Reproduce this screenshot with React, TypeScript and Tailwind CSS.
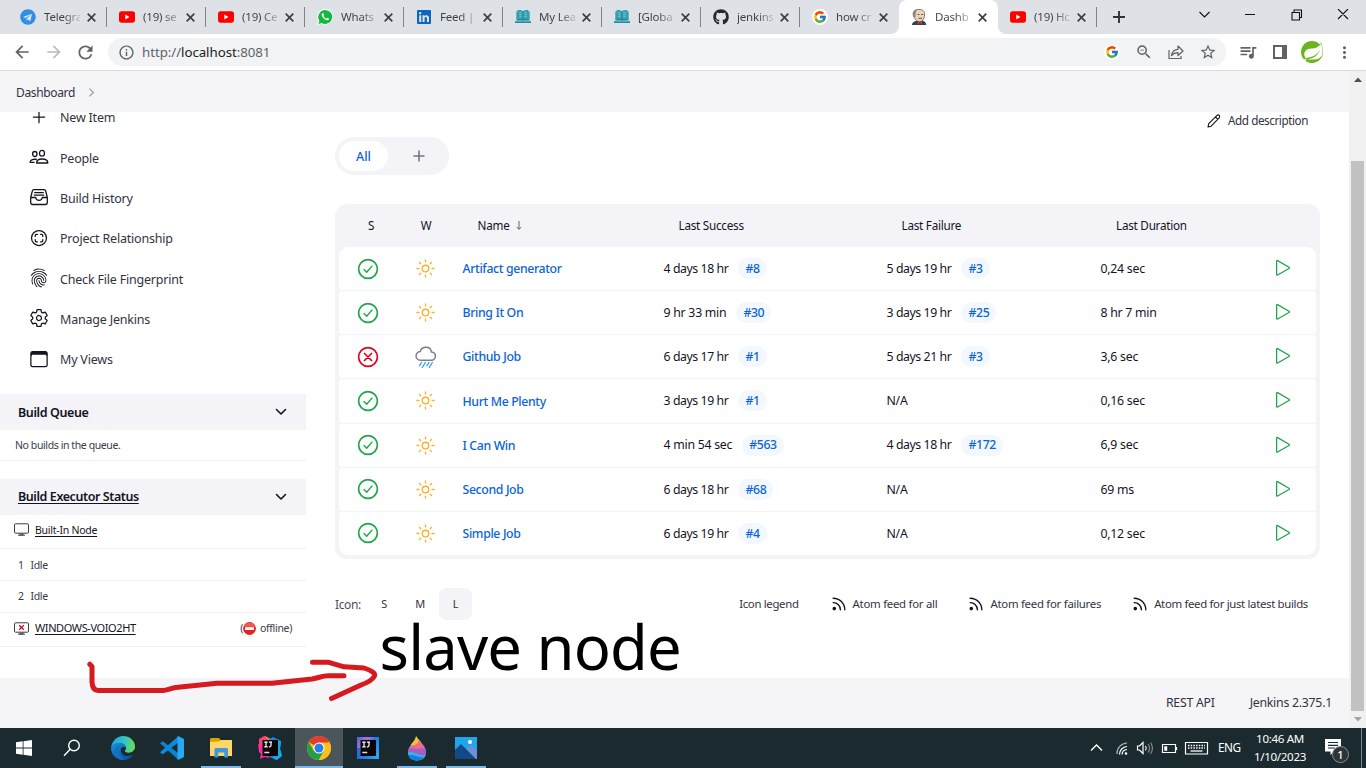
import React from "react";
import {
  IoAddOutline,
  IoFingerPrintOutline,
  IoSettingsOutline,
  IoBrowsersOutline,
  IoScanCircleOutline,
  IoSunnyOutline,
  IoChevronForwardOutline,
} from "react-icons/io5";
import { FaTelegram, FaLinkedin, FaGithub } from "react-icons/fa";
import { FcGoogle } from "react-icons/fc";
import { SiSpring } from "react-icons/si";
import {
  MdArrowBack,
  MdArrowForward,
  MdRefresh,
  MdInfoOutline,
  MdZoomOut,
  MdStarOutline,
  MdQueueMusic,
  MdMoreVert,
} from "react-icons/md";

/* ---------- favicons ---------- */

const YouTube = () => (
  <svg width="16" height="16" viewBox="0 0 16 16">
    <rect x="0" y="2.3" width="16" height="11.4" rx="2.6" fill="#ff0000" />
    <path d="M6.3 5.6v4.8L10.5 8z" fill="#fff" />
  </svg>
);

const WhatsApp = () => (
  <svg width="16" height="16" viewBox="0 0 16 16">
    <path d="M8.1 0a7.8 7.8 0 1 1-3.7 14.7L0 16l1.3-4.2A7.9 7.9 0 0 1 8.1 0z" fill="#fff" />
    <path d="M8.1.9a7 7 0 1 1-3.4 13.1l-3.3.9 1-3.2A7 7 0 0 1 8.1.9z" fill="#12b93f" />
    <path d="M5.4 4.2c-1 .6-1 2 .1 3.6 1.4 2.2 3.4 3.6 5 3.5 1-.1 1.6-.7 1.6-1.7L10.2 8.700l-.9 1C8 9.200 7 8.200 6.400 7l.7-.9-.8-1.900z" fill="#fff" />
  </svg>
);

const Book = () => (
  <svg width="16" height="16" viewBox="0 0 16 16">
    <path d="M1.300 2.600h1.200V1.200C5 .9 7 1.300 8 2.300 9 1.300 11 .9 13.500 1.200v1.400h1.200v9.200H1.300z" fill="#35a0b1" />
    <path d="M0 12.300h16v1.700H0z" fill="#1f8fa0" />
    <path d="M4 3.800h3M4 5.800h3M4 7.800h3M9 3.800h3M9 5.800h3M9 7.800h3" stroke="#8ccdd6" strokeWidth=".7" />
    <path d="M8 2.500v8.800M3 10.200c2-.4 4 0 5 1 1-1 3-1.400 5-1" stroke="#1d7f90" strokeWidth=".8" fill="none" />
  </svg>
);

const GoogleDot = () => (
  <span className="flex size-4 items-center justify-center rounded-full bg-white">
    <FcGoogle size={14} />
  </span>
);

const Butler = () => (
  <svg width="16" height="16" viewBox="0 0 16 16">
    <path d="M1 16c0-2.500 2-3.600 4.500-4.200L11 11.500c2.200.5 4.300 1.800 4.300 4.500z" fill="#3b4048" />
    <path d="M2.300 5C2 2 4.500.4 8 .4S14 2.300 13.600 6c-.3 3.500-2 6.700-5 6.700S3 9.500 2.300 5z" fill="#ecd3b8" stroke="#54463c" strokeWidth=".7" />
    <path d="M2.200 8C.6 3 4 .2 7 .6 4.800 1.500 4.600 4 4.500 8.500z" fill="#8b867d" />
    <path d="M6.500 5.500h2M10.300 5.500h2M7.500 9.300h3.500" stroke="#5c4636" strokeWidth=".9" />
    <path d="M6.500 12.500l2.300 1L11 12.500v2.800l-2.200-1-2.300 1z" fill="#d33833" />
  </svg>
);

const CloseX = () => (
  <svg className="ml-[7px] shrink-0" width="9" height="9" viewBox="0 0 9 9" stroke="#3c4043" strokeWidth="1.700">
    <path d="M.7.7l7.600 7.600M8.300.7L.7 8.300" />
  </svg>
);

type BrowserTab = { title: string; icon: React.ReactNode; active?: boolean; gap?: boolean };

const browserTabs: BrowserTab[] = [
  { title: "Telegra", icon: <FaTelegram size={16} color="#2f8ee6" /> },
  { title: "(19) se", icon: <YouTube /> },
  { title: "(19) Се", icon: <YouTube /> },
  { title: "Whats", icon: <WhatsApp /> },
  { title: "Feed |", icon: <FaLinkedin size={16} color="#0a66c2" /> },
  { title: "My Lea", icon: <Book /> },
  { title: "[Globa", icon: <Book /> },
  { title: "jenkins", icon: <FaGithub size={16} color="#24292f" /> },
  { title: "how cr", icon: <GoogleDot />, gap: true },
  { title: "Dashb", icon: <Butler />, active: true },
  { title: "(19) Hc", icon: <YouTube /> },
];

function TabStrip() {
  return (
    <div className="flex h-[34px] shrink-0 bg-[#dee1e6] pl-[8px] text-[#3c4043]">
      {browserTabs.map((t, i) => (
        <div
          key={i}
          className={
            t.active
              ? "relative flex w-[99px] items-center rounded-t-[8px] bg-white pl-[12px]"
              : "relative flex w-[99px] items-center pl-[12px]"
          }
        >
          {t.active && (
            <svg className="absolute bottom-0 -left-2" width="115" height="8" viewBox="0 0 115 8">
              <path d="M0 8A8 8 0 0 0 8 0v8zM115 8a8 8 0 0 1-8-8v8z" fill="#fff" />
            </svg>
          )}
          <span className="flex size-4 shrink-0">{t.icon}</span>
          <span className="ml-[8px] w-[36px] shrink-0 bg-linear-to-r from-[#3c4043] from-55% to-[#3c404330] bg-clip-text text-[11.500px] tracking-[-0.200px] whitespace-nowrap text-transparent">
            {t.title}
          </span>
          <CloseX />
          {!t.active && !t.gap && <span className="absolute top-[7px] right-0 h-[20px] w-px bg-[#808387]" />}
        </div>
      ))}
      <svg className="mt-[11px] ml-[16px]" width="12" height="12" viewBox="0 0 12 12" stroke="#2f3237" strokeWidth="1.900">
        <path d="M6 0v12M0 6h12" />
      </svg>
      <div className="flex flex-1 items-start justify-end text-black">
        <svg className="mt-[9px]" width="160" height="12" viewBox="0 0 160 12" fill="none" stroke="#111" strokeWidth="1.100">
          <path d="M5.500 3l5 5 5-5M51 5.500h10M98 3.500h7.500V11H98zM100 3.500V1h7.500v7.500h-2M144 0l10 10M154 0l-10 10" />
        </svg>
        <span className="w-[12px]" />
      </div>
    </div>
  );
}

function Toolbar() {
  return (
    <div className="flex h-[37px] shrink-0 items-center border-b border-[#d8dadd] bg-white pl-[12px] text-[#5f6368]">
      <MdArrowBack size={20} />
      <MdArrowForward className="ml-[12px] text-[#b9bbbe]" size={20} />
      <MdRefresh className="ml-[11px]" size={21} />
      <div className="ml-[12px] flex h-[28px] w-[1118px] items-center rounded-full bg-[#f1f3f4] pr-[9px] pl-[10px]">
        <MdInfoOutline size={17} />
        <span className="ml-[7px] flex-1 pt-px text-[13.300px] tracking-[-0.060px]">
          http://<span className="text-[#202124]">localhost</span>:8081
        </span>
        <GoogleDot />
        <MdZoomOut className="ml-[15px]" size={18} />
        <svg className="ml-[15px]" width="16" height="16" viewBox="0 0 16 16" fill="none" stroke="#5f6368" strokeWidth="1.200">
          <path d="M1 6v8.500h12V12" />
          <path d="M3.500 11.500c.6-4 2.800-6 6.500-6.200V2l5 5-5 4.500V8.600c-3 0-4.800.9-6.500 2.900z" strokeLinejoin="round" />
        </svg>
        <MdStarOutline className="ml-[15px]" size={18} />
      </div>
      <MdQueueMusic className="ml-[12px]" size={20} />
      <svg className="ml-[15px]" width="14" height="14" viewBox="0 0 14 14">
        <path d="M0 0h14v14H0zM2 2v10h7V2z" fill="#5f6368" fillRule="evenodd" />
      </svg>
      <SiSpring className="ml-[14px]" size={22} color="#6db51e" />
      <MdMoreVert className="ml-[12px]" size={19} />
    </div>
  );
}

/* ---------- sidebar ---------- */

const People = () => (
  <svg width="20" height="20" viewBox="0 0 20 20" fill="none" stroke="#14141f" strokeWidth="1.300" strokeLinejoin="round">
    <ellipse cx="13" cy="6.200" rx="2.500" ry="2.900" />
    <ellipse cx="5.800" cy="7" rx="2.200" ry="2.500" />
    <path d="M7.600 16c0-2.600 2.500-4 5.500-4s5.700 1.400 5.700 4z" />
    <path d="M7.800 12.500C4.600 11.700 1.300 12.900 1.100 15.300h4.400" />
  </svg>
);

const Tray = () => (
  <svg width="20" height="20" viewBox="0 0 20 20" fill="none" stroke="#14141f" strokeWidth="1.300" strokeLinejoin="round" strokeLinecap="round">
    <path d="M1.700 10.500l1.500-6C3.500 3 4 2.700 5 2.700h10c1 0 1.500.3 1.800 1.800l1.500 6v5c0 1.200-.8 2-2 2H3.700c-1.200 0-2-.8-2-2zM1.700 10.500h5c.3 1.800 1.500 2.800 3.300 2.800s3-1 3.300-2.800h5M5.700 5.600h8.600M5.200 8.100h9.600" />
  </svg>
);

const tasks: { label: string; icon: React.ReactNode }[] = [
  { label: "New Item", icon: <IoAddOutline size={20} /> },
  { label: "People", icon: <People /> },
  { label: "Build History", icon: <Tray /> },
  { label: "Project Relationship", icon: <IoScanCircleOutline size={20} /> },
  { label: "Check File Fingerprint", icon: <IoFingerPrintOutline size={20} /> },
  { label: "Manage Jenkins", icon: <IoSettingsOutline size={20} /> },
  { label: "My Views", icon: <IoBrowsersOutline size={20} /> },
];

const Chevron = () => (
  <svg width="12" height="8" viewBox="0 0 12 8" fill="none" stroke="#14141f" strokeWidth="1.600">
    <path d="M1.500 1.500L6 6l4.500-4.500" strokeLinecap="round" strokeLinejoin="round" />
  </svg>
);

function Monitor({ off }: { off?: boolean }) {
  return (
    <svg width="15" height="13" viewBox="0 0 15 13" fill="none" stroke="#3b3b46" strokeWidth="1">
      <rect x=".5" y=".8" width="14" height="9.400" rx="1" />
      <path d="M6 10.400v1.400h3v-1.400M4 12.200h7" />
      {off && <path d="M5.200 3.200l4.600 4.600M9.800 3.200L5.200 7.800" stroke="#e6001f" strokeWidth="1.300" />}
    </svg>
  );
}

function Sidebar() {
  return (
    <aside className="flex w-[306px] shrink-0 flex-col text-[#14141f]">
      <nav className="-mt-[15px] flex flex-col">
        {tasks.map((t) => (
          <a key={t.label} className="flex h-[40.330px] items-center pl-[29px] text-[12.500px] tracking-[-0.200px] text-[#333340]">
            <span className="pb-px text-[#14141f]">{t.icon}</span>
            <span className="ml-[11px] pt-[3px]">{t.label}</span>
          </a>
        ))}
      </nav>
      <div className="mt-[15px] flex h-[36px] items-center justify-between bg-[#f3f3f8] pr-[19px] pl-[18px] text-[12.500px] font-semibold tracking-[-0.400px]">
        <span className="pt-[2px]">Build Queue</span>
        <Chevron />
      </div>
      <div className="flex h-[31px] items-center border-b border-[#f1f1f5] pt-[2px] pl-[15px] text-[10.500px] tracking-[-0.400px] text-[#3a3a46]">
        No builds in the queue.
      </div>
      <div className="mt-[18px] flex h-[36px] items-center justify-between bg-[#f3f3f8] pr-[19px] pl-[18px] text-[12.500px] font-semibold tracking-[-0.420px]">
        <span className="underline underline-offset-2">Build Executor Status</span>
        <Chevron />
      </div>
      <div className="flex h-[34px] items-center border-b border-[#f1f1f5] pb-[4px] pl-[14px] text-[10.500px] tracking-[-0.250px]">
        <Monitor />
        <span className="ml-[6px] pt-[2px] underline underline-offset-2">Built-In Node</span>
      </div>
      <div className="flex h-[32px] items-center border-b border-[#f1f1f5] pt-[2px] pl-[18px] text-[10.500px] tracking-[-0.350px] text-[#3a3a46]">
        <span className="w-[12.500px]">1</span>Idle
      </div>
      <div className="flex h-[32px] items-center border-b border-[#f1f1f5] pl-[18px] text-[10.500px] tracking-[-0.350px] text-[#3a3a46]">
        <span className="w-[12.500px]">2</span>Idle
      </div>
      <div className="flex h-[34px] items-center border-b border-[#f1f1f5] pr-[14px] pb-[3px] pl-[14px] text-[10.500px] tracking-[-0.320px]">
        <Monitor off />
        <span className="ml-[6px] flex-1 text-[11px] tracking-[-0.400px] underline underline-offset-2">WINDOWS-VOIO2HT</span>
        <span className="flex items-center pt-px text-[#3a3a46]">
          (
          <svg width="13" height="13" viewBox="0 0 13 13">
            <circle cx="6.500" cy="6.500" r="6.400" fill="#e32222" />
            <path d="M.8 5a6 6 0 0 1 11.400 0z" fill="#ee5a52" />
            <rect x="2" y="5.200" width="9" height="2.800" rx=".5" fill="#fff" />
          </svg>
          <span className="ml-[4px]">offline)</span>
        </span>
      </div>
    </aside>
  );
}

/* ---------- jobs table ---------- */

const StatusOk = () => (
  <svg width="22" height="22" viewBox="0 0 22 22" fill="none" stroke="#1ea64b">
    <circle cx="11" cy="11" r="9.400" strokeWidth="1.700" />
    <path d="M7 11.600l2.700 2.700 5.200-6.200" strokeWidth="1.400" strokeLinecap="round" strokeLinejoin="round" />
  </svg>
);

const StatusFail = () => (
  <svg width="22" height="22" viewBox="0 0 22 22" fill="none" stroke="#e6001f">
    <circle cx="11" cy="11" r="9.400" strokeWidth="1.700" />
    <path d="M7.500 7.500l7 7M14.500 7.500l-7 7" strokeWidth="1.700" strokeLinecap="round" />
  </svg>
);

const Rain = () => (
  <svg width="22" height="22" viewBox="0 0 22 22" fill="none">
    <path d="M5.500 14.200a4.300 4.300 0 0 1-.3-8.600C6 2.700 8.200 1.200 11 1.200s5 1.800 5.400 4.800c2.500.3 4 1.800 4 4s-1.600 4.200-4 4.200z" stroke="#7d7b91" strokeWidth="1.500" />
    <path d="M6.500 16.500l-2 3.200M10.300 16.500l-3 5M14 16.500l-2 3.200M17.300 16.500l-3 5" stroke="#27a5e8" strokeWidth="1.300" strokeLinecap="round" />
  </svg>
);

const Play = () => (
  <svg width="16" height="18" viewBox="0 0 16 18" fill="none" stroke="#1ea64b" strokeWidth="1.300" strokeLinejoin="round">
    <path d="M1.600 2.200v13.200c0 .7.500.9 1 .6L14 9.500c.5-.3.500-.9 0-1.200L2.600 1.600c-.5-.3-1-.1-1 .6z" />
  </svg>
);

type Job = { name: string; ok: boolean; success: string; sNo: string; failure: string; fNo?: string; duration: string };

const jobs: Job[] = [
  { name: "Artifact generator", ok: true, success: "4 days 18 hr", sNo: "#8", failure: "5 days 19 hr", fNo: "#3", duration: "0,24 sec" },
  { name: "Bring It On", ok: true, success: "9 hr 33 min", sNo: "#30", failure: "3 days 19 hr", fNo: "#25", duration: "8 hr 7 min" },
  { name: "Github Job", ok: false, success: "6 days 17 hr", sNo: "#1", failure: "5 days 21 hr", fNo: "#3", duration: "3,6 sec" },
  { name: "Hurt Me Plenty", ok: true, success: "3 days 19 hr", sNo: "#1", failure: "N/A", duration: "0,16 sec" },
  { name: "I Can Win", ok: true, success: "4 min 54 sec", sNo: "#563", failure: "4 days 18 hr", fNo: "#172", duration: "6,9 sec" },
  { name: "Second Job", ok: true, success: "6 days 18 hr", sNo: "#68", failure: "N/A", duration: "69 ms" },
  { name: "Simple Job", ok: true, success: "6 days 19 hr", sNo: "#4", failure: "N/A", duration: "0,12 sec" },
];

const When = ({ text, no }: { text: string; no?: string }) => (
  <span className="flex items-center pl-[8.500px]">
    <span className={text.includes("days") ? "pt-px tracking-[-0.420px]" : "pt-px"}>{text}</span>
    {no && (
      <span className="ml-[10px] flex h-[21px] items-center rounded-full bg-[#f2f8fe] px-[7px] pt-px font-medium tracking-[-0.400px] text-[#0b64d6]">
        {no}
      </span>
    )}
  </span>
);

function JobsTable() {
  return (
    <div className="mt-[29px] flex h-[355px] w-[985px] flex-col rounded-[12px] bg-[#f3f3f8] px-[4px] pb-[4px]">
      <div className="grid h-[43px] shrink-0 grid-cols-[58px_57px_201px_223px_214px_158px_66px] items-center pt-px text-[11.700px] tracking-[-0.240px] text-[#14141f]">
        <span className="pl-[6px] text-center">S</span>
        <span className="pl-[1px] text-center">W</span>
        <span className="flex items-center pl-[23.500px]">
          Name
          <svg className="ml-[6px]" width="6" height="9" viewBox="0 0 6 9" fill="none" stroke="#55555f" strokeWidth=".9">
            <path d="M3 0v8.200M.8 6L3 8.300 5.200 6" />
          </svg>
        </span>
        <span className="pl-[23.500px]">Last Success</span>
        <span className="pl-[23.500px]">Last Failure</span>
        <span className="pl-[24px]">Last Duration</span>
        <span />
      </div>
      <div className="flex flex-1 flex-col gap-px overflow-hidden rounded-[9px]">
        {jobs.map((j) => (
          <div
            key={j.name}
            className="grid flex-1 grid-cols-[58px_57px_201px_223px_214px_158px_66px] items-center rounded-[3px] bg-white text-[12.300px] tracking-[-0.250px] text-[#14141f]"
          >
            <span className="flex justify-center">{j.ok ? <StatusOk /> : <StatusFail />}</span>
            <span className="flex justify-center">
              {j.ok ? <IoSunnyOutline size={21} color="#fcaf25" stroke="#fcaf25" strokeWidth={10} /> : <Rain />}
            </span>
            <a className="pt-[1.500px] pl-[8.500px] font-medium tracking-[-0.360px] text-[#0b64d6]">{j.name}</a>
            <When text={j.success} no={j.sNo} />
            <When text={j.failure} no={j.fNo} />
            <span className="pt-px pl-[8.500px]">{j.duration}</span>
            <span className="flex justify-center pb-px">
              <Play />
            </span>
          </div>
        ))}
      </div>
    </div>
  );
}

const Rss = () => (
  <svg width="14" height="14" viewBox="0 0 14 14" fill="none" stroke="#14141f" strokeWidth="1.400" strokeLinecap="round">
    <circle cx="2.300" cy="11.600" r="1.100" fill="#14141f" />
    <path d="M1.200 5.600a7 7 0 0 1 7.200 7.200M1.200 1.200a11.600 11.600 0 0 1 11.600 11.600" />
  </svg>
);

function Main() {
  return (
    <main className="flex flex-1 flex-col pl-[29px] text-[#14141f]">
      <div className="flex h-[17px] items-center justify-end pt-px pr-[41px] text-[11.700px] tracking-[-0.430px] text-[#333340]">
        <svg width="14" height="14" viewBox="0 0 14 14" fill="none" stroke="#14141f" strokeWidth="1.100" strokeLinejoin="round">
          <path d="M1 13l.7-3.300L9.800 1.600c.7-.7 1.700-.8 2.400-.1s.6 1.700-.1 2.400L4.200 12.200zM8.500 3l2.400 2.400" />
        </svg>
        <span className="ml-[7px]">Add description</span>
      </div>
      <div className="mt-[8px] flex h-[38px] w-[114px] items-center rounded-full bg-[#f3f3f8] p-[4px]">
        <span className="flex h-[30px] w-[49px] items-center justify-center rounded-full bg-white pt-[2px] text-[12.500px] font-medium text-[#0b64d6]">All</span>
        <span className="flex flex-1 justify-center pl-[4px]">
          <svg width="12" height="12" viewBox="0 0 12 12" stroke="#777681" strokeWidth="1.600">
            <path d="M6 .5v11M.5 6h11" />
          </svg>
        </span>
      </div>
      <JobsTable />
      <div className="mt-[29px] flex h-[32px] items-center pr-[41px] text-[11.400px] tracking-[-0.330px] text-[#333340]">
        <span className="w-[33px] pt-px text-[12px] tracking-[-0.400px] text-[#4d4d58]">Icon:</span>
        <span className="w-[32px] text-center text-[11px] leading-[14px]">S</span>
        <span className="ml-[4px] w-[32px] text-center text-[11px] leading-[14px]">M</span>
        <span className="ml-[3px] flex h-full w-[33px] items-center justify-center rounded-[8px] bg-[#f3f3f8] text-[11px] leading-[14px]">L</span>
        <span className="flex-1" />
        <span>Icon legend</span>
        <span className="ml-[33px] flex items-center gap-[7px] tracking-[-0.270px]"><Rss />Atom feed for all</span>
        <span className="ml-[32px] flex items-center gap-[7px] tracking-[-0.270px]"><Rss />Atom feed for failures</span>
        <span className="ml-[32px] flex items-center gap-[7px]"><Rss />Atom feed for just latest builds</span>
      </div>
    </main>
  );
}

function Scrollbar() {
  return (
    <div className="flex w-[17px] shrink-0 flex-col items-center bg-[#f1f1f1]">
      <svg className="mt-[6px]" width="8" height="5" viewBox="0 0 8 5"><path d="M0 5l4-4.500L8 5z" fill="#505050" /></svg>
      <div className="mt-[79px] h-[550px] w-[13px] bg-[#c1c1c1]" />
      <svg className="mt-[6px]" width="8" height="5" viewBox="0 0 8 5"><path d="M0 0l4 4.500L8 0z" fill="#a3a3a3" /></svg>
    </div>
  );
}

/* ---------- taskbar ---------- */

const WindowsLogo = () => (
  <svg width="16" height="16" viewBox="0 0 16 16" fill="#fff">
    <path d="M0 2.300L6.700 1.300v6.300H0zM7.500 1.200L16 0v7.600H7.500zM0 8.400h6.700v6.300L0 13.700zM7.500 8.400H16V16l-8.500-1.200z" />
  </svg>
);

const SearchGlyph = () => (
  <svg width="18" height="18" viewBox="0 0 18 18" fill="none" stroke="#fff" strokeWidth="1.400">
    <circle cx="11" cy="6.500" r="5.300" />
    <path d="M7.200 10.300L1 16.700" />
  </svg>
);

const Edge = () => (
  <svg width="24" height="24" viewBox="0 0 24 24">
    <defs>
      <linearGradient id="edgeTop" x1="0" y1=".4" x2="1" y2=".5">
        <stop offset="0" stopColor="#1fa5de" />
        <stop offset=".5" stopColor="#2cc4c9" />
        <stop offset="1" stopColor="#6cdd53" />
      </linearGradient>
      <linearGradient id="edgeBody" x1="0" y1="0" x2=".8" y2="1">
        <stop offset="0" stopColor="#1890df" />
        <stop offset="1" stopColor="#0b4ea0" />
      </linearGradient>
    </defs>
    <path d="M0 11.500C1 5 6 0 12 0c7 0 12 5 12 10.500 0 4-3 6.200-6.200 6.200-2.600 0-4-.9-4-1.700 0-.7 1.200-1.200 1.200-3C15 9 12 7.200 8.500 7.200 5 7.200 1.500 9 0 11.500z" fill="url(#edgeTop)" />
    <path d="M0 12c.5-3 4-5 8.500-5 3.700 0 6.500 2 6.500 5-1-1.500-4-1.500-5 .5-1.500 4.200 2 8.200 7.500 7.500 2-.3 3.500-.8 4.800-1.600C20 22 16 24 12 24 5 24 0 18.500 0 12z" fill="url(#edgeBody)" />
    <path d="M8.500 9.500C5.500 13 7 21 14 23.800 6.500 24.500 2 18 4 13c.8-2 2.500-3.300 4.500-3.500z" fill="#176fc4" />
  </svg>
);

const VsCode = () => (
  <svg width="24" height="24" viewBox="0 0 24 24">
    <path d="M0 7.200l2-1.700c.4-.3.800-.3 1.200 0L18 17v6.500z" fill="#0f7fd0" />
    <path d="M0 16.300l2 1.700c.4.3.8.3 1.200 0L18 6.800V.5z" fill="#1089dc" />
    <path d="M17.500.2c.3-.2.700-.2 1 0l4.700 2.300c.5.200.8.700.8 1.200v16.600c0 .5-.3 1-.8 1.200l-4.700 2.300c-.4.200-1 0-1-.5z" fill="#2aa7f5" />
  </svg>
);

const Explorer = () => (
  <svg width="22" height="20" viewBox="0 0 22 20">
    <path d="M0 1.500C0 .7.700 0 1.500 0H9l1.500 2H22v5H0z" fill="#e0a100" />
    <path d="M0 4l9-.5L11 2h10.200c.5 0 .8.300.8.800V18H0z" fill="#ffd766" />
    <path d="M4.500 19.500v-8c0-1 .6-1.600 1.500-1.600h10.500c.9 0 1.500.600 1.500 1.600v8h-3.700v-5H8.200v5z" fill="#3f97dd" />
  </svg>
);

const IjBox = () => (
  <>
    <rect x="4.500" y="4" width="15.500" height="16" fill="#0b0508" />
    <path d="M6.300 6.200h3.400M8 6.200v4.600M6.300 10.800h3.400M11 6.200h3M13 6.200v3.400q0 1.200-1.300 1.200h-.8" stroke="#fff" strokeWidth="1.200" fill="none" />
    <path d="M6.300 16.500h5" stroke="#ddd" strokeWidth="1.500" />
  </>
);

const IntelliJ = () => (
  <svg width="24" height="24" viewBox="0 0 24 24">
    <path d="M1 12l2-9 4-3 8 4-3 11-6 2z" fill="#f9812d" />
    <path d="M1 3l5-3 4 4-6 7-3 0z" fill="#fe3d7c" />
    <path d="M0 8l5 3 7 11-6-1-4 2 1-5-2-2z" fill="#f72f9b" />
    <path d="M10 4l5-3 8 4-1 8 2 6-6 5-6-3z" fill="#1686e8" />
    <path d="M19 3l4 3-1 7 2 7-5 4-4-2z" fill="#18a7e6" />
    <IjBox />
  </svg>
);

const IntelliJCe = () => (
  <svg width="24" height="24" viewBox="0 0 24 24">
    <defs>
      <linearGradient id="ceFrame" x1="0" y1="0" x2="1" y2=".7">
        <stop offset="0" stopColor="#3c6bd8" />
        <stop offset=".35" stopColor="#b070d8" />
        <stop offset=".6" stopColor="#2377e8" />
        <stop offset="1" stopColor="#2ba5ec" />
      </linearGradient>
    </defs>
    <rect x="1" y="1" width="22" height="22" fill="url(#ceFrame)" />
    <path d="M1 12h3.500v11H1z" fill="#1c6fe0" />
    <IjBox />
  </svg>
);

const Chrome = () => (
  <svg width="24" height="24" viewBox="0 0 24 24">
    <circle cx="12" cy="12" r="12" fill="#fbc116" />
    <path d="M12 12L1.600 6A12 12 0 0 1 22.400 6z" fill="#e33b2e" />
    <path d="M1.600 6A12 12 0 0 0 11.800 24L17 15H7z" fill="#22a04b" />
    <path d="M12 6.500h10.600A12 12 0 0 1 11.800 24L17 15z" fill="#fbc116" />
    <circle cx="12" cy="12" r="5.600" fill="#fff" />
    <circle cx="12" cy="12" r="4.500" fill="#2f7de9" />
  </svg>
);

const Paint3D = () => (
  <svg width="20" height="25" viewBox="0 0 20 25">
    <defs>
      <clipPath id="drop"><path d="M9 0c0 5-8 9-8 16.500C1 21.500 5 24.500 10 24.500s9-3 9-8C19 10 13.500 7 9 0z" /></clipPath>
    </defs>
    <g clipPath="url(#drop)">
      <rect width="20" height="25" fill="#2aa6e8" />
      <path d="M0 0h14v7L5 11z" fill="#fbc02c" />
      <path d="M4 10C8 9 11 8 12 4l8 6v4C14 16 9 12 0 14z" fill="#ef6a8a" />
      <path d="M0 13c8-2 12 2 20-2v9C14 21 8 15 0 17z" fill="#a95bc8" />
      <path d="M0 16c7-2 12 5 20 3v6H0z" fill="#35b0ea" />
      <path d="M0 19c7-1 12 4 20 2v5H0z" fill="#1580d6" />
    </g>
  </svg>
);

const Photos = () => (
  <svg width="22" height="22" viewBox="0 0 22 22">
    <rect width="22" height="22" fill="#20a4ea" />
    <path d="M9 14l7-6 6 6v8H9z" fill="#6f8fdb" />
    <path d="M0 13l6-6 15 15H0z" fill="#124a86" />
    <circle cx="15" cy="5" r="2.100" fill="#fff" />
  </svg>
);

const apps: { id: string; icon: React.ReactNode; state?: "open" | "active" }[] = [
  { id: "edge", icon: <Edge /> },
  { id: "code", icon: <VsCode /> },
  { id: "files", icon: <Explorer />, state: "open" },
  { id: "idea", icon: <IntelliJ /> },
  { id: "chrome", icon: <Chrome />, state: "active" },
  { id: "idea-ce", icon: <IntelliJCe /> },
  { id: "paint", icon: <Paint3D />, state: "open" },
  { id: "photos", icon: <Photos />, state: "open" },
];

function Taskbar() {
  return (
    <div className="flex h-[40px] shrink-0 items-center bg-[#1a2a2f] text-white">
      <span className="flex w-[48px] justify-center"><WindowsLogo /></span>
      <span className="flex w-[50px] justify-center pr-[2px]"><SearchGlyph /></span>
      {apps.map((a) => (
        <span
          key={a.id}
          className={
            a.state === "active"
              ? "relative ml-px flex h-full w-[48px] items-center justify-center bg-[#4a5659]"
              : "relative flex h-full w-[49px] items-center justify-center"
          }
        >
          {a.icon}
          {a.state === "open" && <span className="absolute bottom-0 left-[5px] h-[2px] w-[40px] bg-[#76b9ed]" />}
          {a.state === "active" && <span className="absolute bottom-0 left-0 h-[2px] w-full bg-[#76b9ed]" />}
        </span>
      ))}
      <span className="flex-1" />
      <svg width="124" height="20" viewBox="0 0 124 20" fill="none" stroke="#fff" strokeWidth="1.200">
        <path d="M2 12.500L7.500 7l5.500 5.500" strokeWidth="1.400" />
        <path d="M28 16a10.500 10.500 0 0 1 10-11" stroke="#aab1b3" />
        <path d="M30.500 16.500A8 8 0 0 1 38 8.500M33 16.500a5.500 5.500 0 0 1 5-5" />
        <circle cx="37" cy="15.500" r="1.300" fill="#fff" stroke="none" />
        <path d="M48.500 8v4h2l3.500 3.500v-11L50.500 8zM56.500 8a4 4 0 0 1 0 4.500" />
        <path d="M59 6a7 7 0 0 1 0 8.500M61.500 4.500a10 10 0 0 1 0 11.500" stroke="#7f898c" />
        <path d="M73.500 6.500h13v8h-13zM87.500 9v3" />
        <path d="M75.500 8.500h2.500v4h-2.500z" fill="#fff" strokeWidth=".5" />
        <path d="M96.500 4.500h22v11.500h-22z" />
        <path d="M99 7.500h17M99 10h17" strokeDasharray="1.500 1.200" strokeWidth="1.300" />
        <path d="M101.500 13h12" strokeWidth="1.300" />
      </svg>
      <span className="ml-[5px] w-[24px] text-[11.800px] tracking-[-0.500px]">ENG</span>
      <div className="ml-[10px] flex w-[56px] flex-col items-center text-[11.600px] leading-[18px] tracking-[-0.350px] whitespace-nowrap">
        <span>10:46 AM</span>
        <span>1/10/2023</span>
      </div>
      <div className="relative ml-[16px] h-[24px] w-[24px]">
        <svg className="absolute top-[3px] left-0" width="18" height="16" viewBox="0 0 18 16">
          <path d="M1 0h16v12.500h-7L6.500 16v-3.500H1z" fill="#fff" />
          <path d="M4 3.500h10M4 6.300h10M4 9h7" stroke="#1a2a2f" strokeWidth="1.200" />
        </svg>
        <span className="absolute top-[10px] left-[8px] flex size-[17px] items-center justify-center rounded-full border border-[#8a9092] bg-[#2c3437] text-[11px] leading-none font-medium">
          1
        </span>
      </div>
      <span className="ml-[13px] h-full w-px bg-[#78898f]" />
      <span className="w-[4px]" />
    </div>
  );
}

function Annotation() {
  return (
    <>
      <svg className="pointer-events-none absolute top-[650px] left-[80px]" width="310" height="60" viewBox="80 650 310 60" fill="none" stroke="#d71920" strokeWidth="5" strokeLinecap="round" strokeLinejoin="round">
        <path d="M89.800 664.200L92 666.500V682Q92.500 690.500 98 690.500H163C168 690 172 687.500 178 687.300L217 683.300H272L312 679C320 677.500 322 675.800 328 675.800H344" />
        <path d="M312.500 662.200H328L344 666.800 364 668Q376 672 374.500 676 372 681 361 685L331.500 698.500" />
      </svg>
      <span className="pointer-events-none absolute top-[618px] left-[379.500px] text-[61.500px] leading-[56px] tracking-[-0.800px] whitespace-nowrap text-black">
        slave node
      </span>
    </>
  );
}

export default function App() {
  return (
    <div className="relative flex h-[768px] w-[1366px] flex-col overflow-hidden bg-white font-['Noto_Sans','Open_Sans',sans-serif]">
      <TabStrip />
      <Toolbar />
      <div className="flex h-[657px] shrink-0">
        <div className="flex flex-1 flex-col">
          <div className="flex h-[41px] shrink-0 items-center bg-[#f5f5f8] pt-[2px] pl-[16px] text-[12px] tracking-[-0.350px] text-[#333340]">
            Dashboard
            <IoChevronForwardOutline className="ml-[10px]" size={13} color="#9b9ba8" />
          </div>
          <div className="flex h-[566px] shrink-0 overflow-hidden">
            <Sidebar />
            <Main />
          </div>
          <footer className="flex h-[50px] items-center justify-end gap-[35px] bg-[#f5f5f8] pr-[17px] text-[12.300px] tracking-[-0.250px] text-[#333340]">
            <span>REST API</span>
            <span>Jenkins 2.375.1</span>
          </footer>
        </div>
        <Scrollbar />
      </div>
      <Taskbar />
      <Annotation />
    </div>
  );
}
